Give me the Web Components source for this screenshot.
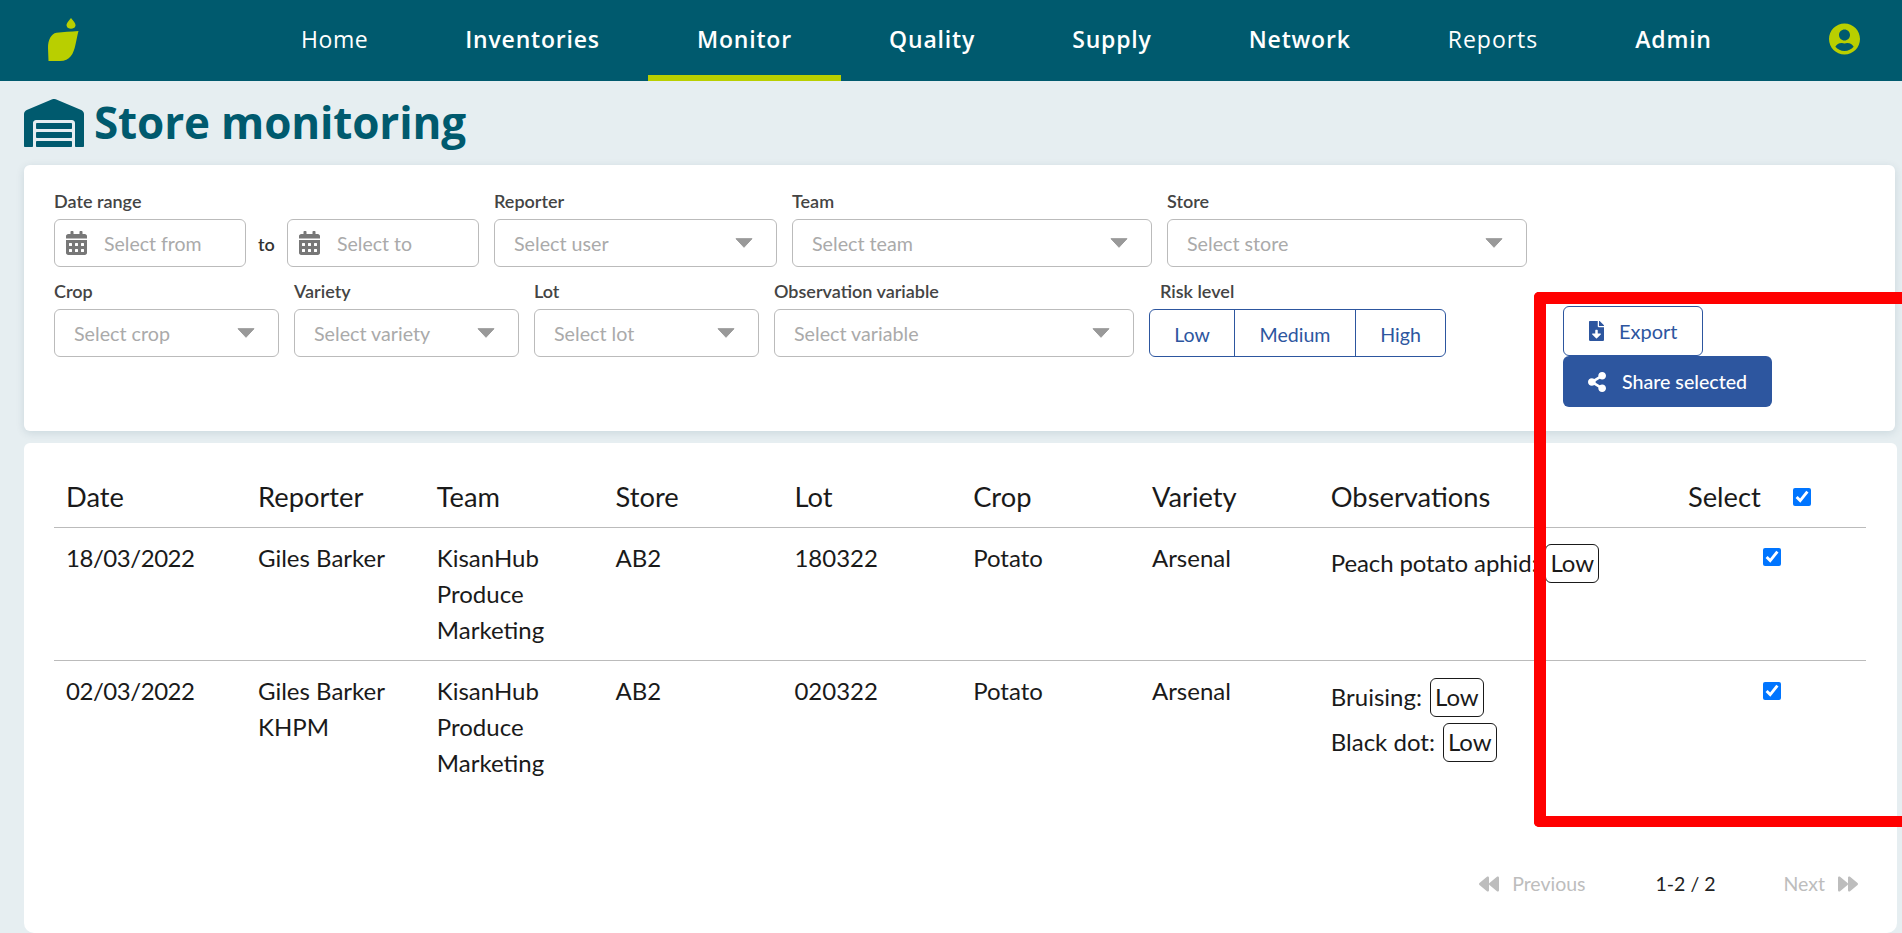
<!DOCTYPE html>
<html lang="en"><head><meta charset="utf-8"><title>Store monitoring</title>
<style>
html,body{margin:0;padding:0;height:933px;overflow:hidden;background:#e6eef1;font-family:"Lato","Liberation Sans",sans-serif;color:#222}
body{position:relative}
</style></head><body>
<app-header></app-header>
<page-title>Store monitoring</page-title>
<filter-card></filter-card>
<results-card></results-card>
<red-frame></red-frame>
<script>
const ICON={
warehouse:['0 0 640 512','M504 352H136.4c-4.4 0-8 3.6-8 8l-.1 48c0 4.4 3.6 8 8 8H504c4.4 0 8-3.6 8-8v-48c0-4.4-3.6-8-8-8zm0 96H136.1c-4.4 0-8 3.6-8 8l-.1 48c0 4.4 3.6 8 8 8h368c4.4 0 8-3.6 8-8v-48c0-4.4-3.6-8-8-8zm0-192H136.6c-4.4 0-8 3.6-8 8l-.1 48c0 4.4 3.6 8 8 8H504c4.4 0 8-3.6 8-8v-48c0-4.4-3.6-8-8-8zm106.5-139L338.4 3.7a48.15 48.15 0 0 0-36.9 0L29.5 117C11.7 124.5 0 141.9 0 161.3V504c0 4.4 3.6 8 8 8h80c4.4 0 8-3.6 8-8V256c0-17.6 14.6-32 32.6-32h382.8c18 0 32.6 14.4 32.6 32v248c0 4.4 3.6 8 8 8h80c4.4 0 8-3.6 8-8V161.3c0-19.4-11.7-36.8-29.5-44.3z'],
calendar:['0 0 448 512','M0 464c0 26.5 21.5 48 48 48h352c26.5 0 48-21.5 48-48V192H0v272zm320-196c0-6.6 5.4-12 12-12h40c6.6 0 12 5.4 12 12v40c0 6.6-5.4 12-12 12h-40c-6.6 0-12-5.4-12-12v-40zm0 128c0-6.6 5.4-12 12-12h40c6.6 0 12 5.4 12 12v40c0 6.6-5.4 12-12 12h-40c-6.6 0-12-5.4-12-12v-40zM192 268c0-6.6 5.4-12 12-12h40c6.6 0 12 5.4 12 12v40c0 6.6-5.4 12-12 12h-40c-6.6 0-12-5.4-12-12v-40zm0 128c0-6.6 5.4-12 12-12h40c6.6 0 12 5.4 12 12v40c0 6.6-5.4 12-12 12h-40c-6.6 0-12-5.4-12-12v-40zM64 268c0-6.6 5.4-12 12-12h40c6.6 0 12 5.4 12 12v40c0 6.6-5.4 12-12 12H76c-6.6 0-12-5.4-12-12v-40zm0 128c0-6.6 5.4-12 12-12h40c6.6 0 12 5.4 12 12v40c0 6.6-5.4 12-12 12H76c-6.6 0-12-5.4-12-12v-40zM400 64h-48V16c0-8.8-7.2-16-16-16h-32c-8.8 0-16 7.2-16 16v48H160V16c0-8.8-7.2-16-16-16h-32c-8.8 0-16 7.2-16 16v48H48C21.5 64 0 85.5 0 112v48h448v-48c0-26.5-21.5-48-48-48z'],
download:['0 0 384 512','M224 136V0H24C10.7 0 0 10.7 0 24v464c0 13.3 10.7 24 24 24h336c13.3 0 24-10.7 24-24V160H248c-13.2 0-24-10.8-24-24zm76.45 211.36l-96.42 95.7c-6.65 6.61-17.39 6.61-24.04 0l-96.42-95.7C73.42 337.29 80.54 320 94.82 320H160v-80c0-8.84 7.16-16 16-16h32c8.84 0 16 7.16 16 16v80h65.18c14.28 0 21.4 17.29 11.27 27.36zM377 105L279.1 7c-4.5-4.5-10.6-7-17-7H256v128h128v-6.1c0-6.3-2.5-12.4-7-16.9z'],
share:['0 0 448 512','M352 320c-22.608 0-43.387 7.819-59.79 20.895l-102.486-64.054a96.551 96.551 0 0 0 0-41.683l102.486-64.054C308.613 184.181 329.392 192 352 192c53.019 0 96-42.981 96-96S405.019 0 352 0s-96 42.981-96 96c0 7.158.79 14.13 2.276 20.841L155.79 180.895C139.387 167.819 118.608 160 96 160c-53.019 0-96 42.981-96 96s42.981 96 96 96c22.608 0 43.387-7.819 59.79-20.895l102.486 64.054A96.301 96.301 0 0 0 256 416c0 53.019 42.981 96 96 96s96-42.981 96-96-42.981-96-96-96z'],
user:['0 0 496 512','M248 8C111 8 0 119 0 256s111 248 248 248 248-111 248-248S385 8 248 8zm0 96c48.6 0 88 39.4 88 88s-39.4 88-88 88-88-39.4-88-88 39.4-88 88-88zm0 344c-58.7 0-111.3-26.6-146.5-68.2 18.8-35.4 55.6-59.8 98.5-59.8 2.4 0 4.8.4 7.1 1.1 13 4.2 26.6 6.9 40.9 6.9 14.3 0 28-2.7 40.9-6.9 2.3-.7 4.7-1.1 7.1-1.1 42.9 0 79.7 24.4 98.5 59.8C359.3 421.4 306.7 448 248 448z'],
back:['0 0 512 512','M11.5 280.6l192 160c20.6 17.2 52.5 2.8 52.5-24.6V96c0-27.4-31.9-41.8-52.5-24.6l-192 160c-15.3 12.8-15.3 36.4 0 49.2zm256 0l192 160c20.6 17.2 52.5 2.8 52.5-24.6V96c0-27.4-31.9-41.8-52.5-24.6l-192 160c-15.3 12.8-15.3 36.4 0 49.2z'],
forward:['0 0 512 512','M500.5 231.4l-192-160C287.9 54.3 256 68.6 256 96v320c0 27.4 31.9 41.8 52.5 24.6l192-160c15.3-12.8 15.3-36.4 0-49.2zm-256 0l-192-160C31.9 54.3 0 68.6 0 96v320c0 27.4 31.9 41.8 52.5 24.6l192-160c15.3-12.8 15.3-36.4 0-49.2z']
};
const svg=(n,w,h,c='currentColor')=>`<svg width="${w}" height="${h}" viewBox="${ICON[n][0]}" fill="${c}" preserveAspectRatio="none" aria-hidden="true"><path d="${ICON[n][1]}"/></svg>`;
class Base extends HTMLElement{
  render(html){const r=this.shadowRoot||this.attachShadow({mode:'open'});r.innerHTML=html;}
}
class AppHeader extends Base{connectedCallback(){
  const items=[['Home',''],['Inventories','b'],['Monitor','b on'],['Quality','b'],['Supply','b'],['Network','b'],['Reports','r'],['Admin','b']];
  this.render(`<style>
  :host{display:flex;height:81px;background:#005a6e;color:#fff;align-items:stretch}
  .logo{width:252.5px;flex:none;display:flex}
  .logo svg{margin:18px 0 0 48px}
  nav{display:flex;flex:1;font-family:"Open Sans","Lato",sans-serif;font-size:23px}
  nav a{padding:3px 48.6px 0;display:flex;align-items:center;box-sizing:border-box;height:81px;border-bottom:6px solid transparent;letter-spacing:.5px}
  nav a.b{font-weight:600;letter-spacing:.8px}
  nav a.r{letter-spacing:.95px}
  nav a.on{border-bottom-color:#b9cf00}
  .user{margin:23px 42px 0 0;width:31px;height:32px;flex:none}
  </style>
  <div class="logo"><svg width="31" height="43" viewBox="0 0 31 43"><path fill="#b9cf00" d="M23 0c2 2.500 5 5.500 4.500 7.800C27 10 25 10.800 23 10.800s-4-.8-4.400-3C18.100 5.500 21 2.500 23 0z"/><path fill="#b9cf00" d="M30.500 13c-.8 2.500-1.500 7-3 13.500C25.500 36 22 43 12 43H.5L0 30C0 22 3 15.800 8.500 14.800c7-.9 14-1 22-1.800z"/></svg></div>
  <nav>${items.map(i=>`<a class="${i[1]}">${i[0]}</a>`).join('')}</nav>
  <div class="user">${svg('user',31,32,'#b9cf00')}</div>`);
}}
class PageTitle extends Base{connectedCallback(){
  this.render(`<style>
  :host{display:flex;height:84px;padding:18px 0 0 24px;box-sizing:border-box;gap:10px;color:#005a6e;align-items:flex-start}
  h1{margin:-7px 0 0;font:700 44px/60px "Open Sans","Lato",sans-serif;letter-spacing:-.15px}
  svg{flex:none}
  </style>${svg('warehouse',60,48)}<h1><slot></slot></h1>`);
}}
class FilterField extends Base{connectedCallback(){
  const w=this.getAttribute('w'),l=this.getAttribute('label'),p=this.getAttribute('pad')||0;
  this.render(`<style>
  :host{display:block;width:${w}px;flex:none}
  .l{display:block;height:24px;line-height:24px;margin-bottom:6px;padding-left:${p}px;color:#444;font-weight:600;white-space:nowrap;font-size:18px}
  :host([tight]) .l{margin-top:-1px;margin-bottom:6px}
  </style><span class="l">${l||'&nbsp;'}</span><slot></slot>`);
}}
class SelectBox extends Base{connectedCallback(){
  const p=this.getAttribute('placeholder');
  this.render(`<style>
  :host{display:flex;height:48px;box-sizing:border-box;border:1px solid #bbb;border-radius:6px;background:#fff;align-items:center;justify-content:space-between;padding:0 23px 0 19px;color:#aaa;font-size:19.7px}
  svg{flex:none}
  </style><span>${p}</span><svg width="18" height="10" viewBox="0 0 18 10"><path fill="#999" stroke="#999" stroke-width="1" stroke-linejoin="round" d="M1 .7h16L9 9.300z"/></svg>`);
}}
class DateBox extends Base{connectedCallback(){
  const p=this.getAttribute('placeholder');
  this.render(`<style>
  :host{display:flex;height:48px;box-sizing:border-box;border:1px solid #bbb;border-radius:6px;background:#fff;align-items:center;padding:0 0 0 11px;gap:17px;color:#aaa;font-size:19.5px}
  svg{flex:none;color:#777}
  </style>${svg('calendar',21,24)}<span>${p}</span>`);
}}
class RiskToggle extends Base{connectedCallback(){
  this.render(`<style>
  :host{display:flex;height:48px;box-sizing:border-box;border:1px solid #2d569f;border-radius:6px;color:#2d569f;font-size:19.6px;background:#fff}
  span{display:flex;align-items:center;justify-content:center;box-sizing:border-box;padding-top:3px}
  span+span{border-left:1px solid #2d569f}
  </style><span style="width:84px">Low</span><span style="width:121px">Medium</span><span style="flex:1">High</span>`);
}}
class ActionButton extends Base{connectedCallback(){
  const k=this.getAttribute('kind');
  const primary=k==='primary';
  this.render(`<style>
  :host{display:flex;width:${primary?209:140}px;height:${primary?51:50}px;box-sizing:border-box;border-radius:6px;align-items:center;font-size:${primary?19.6:20}px;
  ${primary?'background:#2d569f;color:#fff;padding-left:25px;gap:16px;font-weight:500':'background:#fff;color:#2d569f;border:1px solid #2d569f;padding-left:25px;gap:15px'}}
  svg{flex:none}
  </style>${primary?svg('share',18,20):svg('download',15,20)}<slot></slot>`);
}}
class FilterCard extends Base{connectedCallback(){
  this.render(`<style>
  :host{display:grid;grid-template-columns:1509px 1fr;grid-template-rows:78px auto;row-gap:13px;margin:0 7px 0 24px;height:266px;box-sizing:border-box;padding:24px 0 0 30px;background:#fff;border-radius:6px;box-shadow:0 2px 8px rgba(0,60,80,.12)}
  .row{display:flex;gap:15px;align-items:flex-start}
  .row.one{grid-column:1/3}
  .to{align-self:flex-start;margin:36px -4px 0 -3px;width:18px;font-size:18px;font-weight:600;color:#333;padding-top:8px}
  .actions{display:flex;flex-direction:column;margin-top:26px;grid-column:2}
  </style>
  <div class="row one">
   <filter-field w="192" label="Date range"><date-box placeholder="Select from"></date-box></filter-field>
   <span class="to">to</span>
   <filter-field w="192"><date-box placeholder="Select to"></date-box></filter-field>
   <filter-field w="283" label="Reporter"><select-box placeholder="Select user"></select-box></filter-field>
   <filter-field w="360" label="Team"><select-box placeholder="Select team"></select-box></filter-field>
   <filter-field w="360" label="Store"><select-box placeholder="Select store"></select-box></filter-field>
  </div>
  <div class="row">
   <filter-field tight w="225" label="Crop"><select-box placeholder="Select crop"></select-box></filter-field>
   <filter-field tight w="225" label="Variety"><select-box placeholder="Select variety"></select-box></filter-field>
   <filter-field tight w="225" label="Lot"><select-box placeholder="Select lot"></select-box></filter-field>
   <filter-field tight w="360" label="Observation variable"><select-box placeholder="Select variable"></select-box></filter-field>
   <filter-field tight w="297" pad="11" label="Risk level"><risk-toggle></risk-toggle></filter-field>
  </div>
  <div class="actions"><action-button>Export</action-button><action-button kind="primary">Share selected</action-button></div>`);
}}
class RiskBadge extends Base{connectedCallback(){
  this.render(`<style>
  :host{display:inline-flex;align-items:center;height:39px;box-sizing:border-box;padding:0 4px;border:1px solid #1a1a1a;border-radius:6px;margin-left:8px;letter-spacing:0}
  </style><slot></slot>`);
}}
class ObsLine extends Base{connectedCallback(){
  this.render(`<style>:host{display:flex;align-items:center;height:45px;white-space:nowrap}</style><slot></slot>`);
}}
class ResultsCard extends Base{connectedCallback(){
  const row=(d,r,obs)=>`<tr><td class="d">${d}</td><td>${r}</td><td>KisanHub Produce Marketing</td><td>AB2</td><td>${d.slice(0,2)+d.slice(3,5)+d.slice(8)}</td><td>Potato</td><td>Arsenal</td><td class="obs">${obs}</td><td class="chk"><input type="checkbox" checked aria-label="Select row"></td></tr>`;
  this.render(`<style>
  :host{display:flex;flex-direction:column;margin:12px 5px 0 24px;height:490px;box-sizing:border-box;padding:24px 30px 0 30px;background:#fff;border-radius:6px 6px 10px 10px;font-size:24px;line-height:36px;color:#1a1a1a}
  table{border-collapse:collapse;table-layout:fixed;width:1812px}
  th{font-weight:400;text-align:left;font-size:27.3px;height:60px;padding:0 12px;border-bottom:1px solid #bbb;box-sizing:border-box;vertical-align:middle}
  td{padding:12px 12px 12px;vertical-align:top;border-bottom:1px solid #bbb}
  td.d{letter-spacing:-.45px}
  tr:last-child td{border-bottom:0}
  td.obs{padding-top:0;padding-bottom:0}
  td.obs obs-line:first-child{margin-top:13px}
  tr:last-child td.obs obs-line:first-child{margin-top:14px}
  tr:first-child td.obs{letter-spacing:-.12px}
  td.chk{text-align:center;padding:20px 11px 0 13px;line-height:0}
  tr:last-child td.chk{padding-top:21px}
  input{width:18px;height:18px;margin:0;accent-color:#0075ff}
  .sel{display:flex;align-items:center;justify-content:space-between;padding-right:43px}
  .pager{display:flex;align-items:center;margin-top:auto;margin-bottom:35px;height:28px;font-size:19.5px;justify-content:flex-end;padding-right:9px;line-height:28px}
  .muted{color:#bdbdbd;display:flex;align-items:center;gap:13px}
  .count{margin:0 68px 0 70px;color:#222}
  </style>
  <table><colgroup><col style="width:192px"><col style="width:178.8px"><col style="width:178.8px"><col style="width:178.8px"><col style="width:178.8px"><col style="width:178.8px"><col style="width:178.8px"><col style="width:357.2px"><col></colgroup>
  <thead><tr><th>Date</th><th>Reporter</th><th>Team</th><th>Store</th><th>Lot</th><th>Crop</th><th>Variety</th><th>Observations</th><th><div class="sel"><span>Select</span><input type="checkbox" checked aria-label="Select all"></div></th></tr></thead>
  <tbody>
  ${row('18/03/2022','Giles Barker','<obs-line>Peach potato aphid: <risk-badge>Low</risk-badge></obs-line>')}
  ${row('02/03/2022','Giles Barker KHPM','<obs-line>Bruising: <risk-badge>Low</risk-badge></obs-line><obs-line>Black dot: <risk-badge>Low</risk-badge></obs-line>')}
  </tbody></table>
  <div class="pager"><span class="muted">${svg('back',20,20)}Previous</span><span class="count">1-2 / 2</span><span class="muted">Next${svg('forward',20,20)}</span></div>`);
}}
class RedFrame extends Base{connectedCallback(){
  this.render(`<style>:host{position:absolute;left:1534px;top:292px;width:368px;height:535px;box-sizing:border-box;border:solid #ff0000;border-width:12px 0 11px 12px;border-radius:5px 0 0 5px;pointer-events:none;z-index:5}</style>`);
}}
customElements.define('app-header',AppHeader);
customElements.define('page-title',PageTitle);
customElements.define('filter-field',FilterField);
customElements.define('select-box',SelectBox);
customElements.define('date-box',DateBox);
customElements.define('risk-toggle',RiskToggle);
customElements.define('action-button',ActionButton);
customElements.define('filter-card',FilterCard);
customElements.define('risk-badge',RiskBadge);
customElements.define('obs-line',ObsLine);
customElements.define('results-card',ResultsCard);
customElements.define('red-frame',RedFrame);
</script>
</body></html>
